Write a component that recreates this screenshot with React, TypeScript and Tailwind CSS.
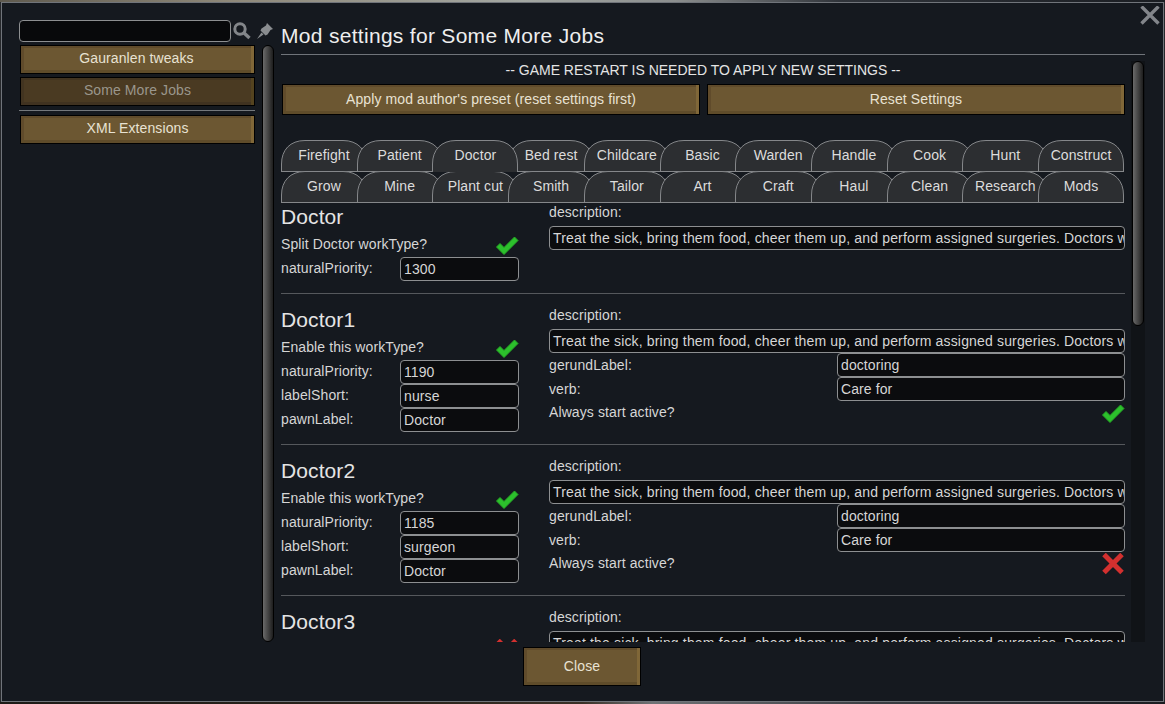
import React from "react";

const F = "font-['Liberation_Sans',Arial,sans-serif]";
const DESC = "Treat the sick, bring them food, cheer them up, and perform assigned surgeries. Doctors will also rescue the wounded.";

function Btn({ label, className = "", dim = false }: { label: string; className?: string; dim?: boolean }) {
  return (
    <div
      className={`flex items-center justify-center border border-black text-[14px] ${
        dim
          ? "bg-[#4a3a22] text-[#9a968c] shadow-[inset_-3px_0_0_#54431f,inset_0_-3px_0_#403220,inset_3px_0_0_#423420,inset_0_2px_0_#423420]"
          : "bg-[#6c5732] text-[#e8e2d2] shadow-[inset_-3px_0_0_#806738,inset_0_-3px_0_#5f4c2a,inset_3px_0_0_#604b2b,inset_0_2px_0_#604b2b]"
      } ${className}`}
    >
      {label}
    </div>
  );
}

function Field({ value, className = "" }: { value: string; className?: string }) {
  return (
    <div className={`h-[24px] border border-[#8d8f91] rounded-[4px] bg-[#0b0c0e] px-[3px] text-[14px] leading-[22px] text-[#d6d6d6] overflow-hidden whitespace-nowrap ${className}`}>
      {value}
    </div>
  );
}

function Check() {
  return (
    <svg width="24" height="22" viewBox="0 0 24 22" className="shrink-0">
      <path d="M1.5 13 L5 9.5 L9 13.5 L19.5 3 L23 6.5 L9 20.5 Z" fill="#2cc02c" stroke="#26a826" strokeWidth="1" />
    </svg>
  );
}

function Cross() {
  return (
    <svg width="24" height="22" viewBox="0 0 24 22" className="shrink-0">
      <path d="M3 1.5 L21 19.5 M21 1.5 L3 19.5" fill="none" stroke="#d3302f" strokeWidth="5" />
    </svg>
  );
}

function Row({ label, children }: { label: string; children: React.ReactNode }) {
  return (
    <div className="flex h-[24px] justify-between items-start">
      <div className="leading-[22px] text-[14px] text-[#d6d6d6] w-[119px] whitespace-nowrap">{label}</div>
      {children}
    </div>
  );
}

type S = {
  name: string;
  toggle: string;
  on: boolean;
  prio: string;
  short?: string;
  pawn?: string;
  start?: boolean;
  first?: boolean;
};

function Section({ s }: { s: S }) {
  return (
    <div className={`flex gap-[30px] w-[844px] shrink-0 border-b border-[#55585c] ${s.first ? "h-[92px]" : "h-[151px] pt-[11px]"}`}>
      <div className="w-[238px] shrink-0">
        <div className="h-[31px] text-[21px] leading-[30px] text-[#e4e4e4]">{s.name}</div>
        <div className="flex h-[24px] justify-between items-center">
          <span className="text-[14px] leading-[22px] text-[#d6d6d6] -mt-[3px]">{s.toggle}</span>
          {s.on ? <Check /> : <Cross />}
        </div>
        <Row label="naturalPriority:"><Field value={s.prio} className="w-[119px]" /></Row>
        {s.short && <Row label="labelShort:"><Field value={s.short} className="w-[119px]" /></Row>}
        {s.pawn && <Row label="pawnLabel:"><Field value={s.pawn} className="w-[119px]" /></Row>}
      </div>
      <div className="w-[576px] shrink-0">
        <div className="h-[24px] text-[14px] leading-[20px] text-[#d6d6d6]">description:</div>
        <Field value={DESC} className="tracking-[0.16px]" />
        {s.pawn && (
          <>
            <div className="flex h-[24px] items-start">
              <span className="w-[288px] text-[14px] leading-[24px] text-[#d6d6d6]">gerundLabel:</span>
              <Field value="doctoring" className="w-[288px]" />
            </div>
            <div className="flex h-[24px] items-start">
              <span className="w-[288px] text-[14px] leading-[24px] text-[#d6d6d6]">verb:</span>
              <Field value="Care for" className="w-[288px]" />
            </div>
            <div className="flex h-[24px] items-center justify-between">
              <span className="text-[14px] leading-[22px] text-[#d6d6d6] -mt-[3px]">Always start active?</span>
              {s.start ? <Check /> : <Cross />}
            </div>
          </>
        )}
      </div>
    </div>
  );
}

function Tab({ label, selected = false }: { label: string; selected?: boolean }) {
  return (
    <div className={`relative w-[86px] h-[31px] -mr-[10.3px] shrink-0 flex items-center justify-center text-[14px] text-[#dcdcdc] ${selected ? "z-10" : ""}`}>
      <svg width="86" height="32" viewBox="0 0 86 32" className="absolute left-0 top-0">
        <path d="M0.5 32 V24 C0.5 10 9 0.5 24 0.5 H62 C77 0.5 85.5 10 85.5 24 V32 Z" fill="#2c2e31" stroke="none" />
        <path d="M0.5 32 V24 C0.5 10 9 0.5 24 0.5 H62 C77 0.5 85.5 10 85.5 24 V32" fill="none" stroke="#85878a" strokeWidth="1" />
        {!selected && <path d="M0 31.5 H86" stroke="#85878a" strokeWidth="1" />}
      </svg>
      <span className="relative">{label}</span>
    </div>
  );
}

const row1 = ["Firefight", "Patient", "Doctor", "Bed rest", "Childcare", "Basic", "Warden", "Handle", "Cook", "Hunt", "Construct"];
const row2 = ["Grow", "Mine", "Plant cut", "Smith", "Tailor", "Art", "Craft", "Haul", "Clean", "Research", "Mods"];

const sections: S[] = [
  { name: "Doctor", toggle: "Split Doctor workType?", on: true, prio: "1300", first: true },
  { name: "Doctor1", toggle: "Enable this workType?", on: true, prio: "1190", short: "nurse", pawn: "Doctor", start: true },
  { name: "Doctor2", toggle: "Enable this workType?", on: true, prio: "1185", short: "surgeon", pawn: "Doctor", start: false },
  { name: "Doctor3", toggle: "Enable this workType?", on: false, prio: "1180" },
];

export default function App() {
  return (
    <div className={`${F} w-[1165px] h-[704px] bg-[#26282b] overflow-hidden flex flex-col tracking-[0.1px]`}>
      <div className="h-[2px] shrink-0 bg-[linear-gradient(90deg,#5f5a4e_0%,#8f897a_20%,#a3a7a2_45%,#8b8e8e_58%,#30343a_72%,#1a1d22_100%)]" />
      <div className="relative mx-[1px] flex-1 min-h-0 border border-[#70747a] bg-[#15191f] flex">
        {/* close X */}
        <svg width="20" height="20" viewBox="0 0 20 20" className="absolute right-[3px] top-[3px]">
          <path d="M1.5 0.5 L18.5 17.5 M18.5 0.5 L1.5 17.5" stroke="#82858a" strokeWidth="3.4" fill="none" />
        </svg>

        {/* left column */}
        <div className="w-[279px] shrink-0 pl-[17px] pt-[17px] flex flex-col">
          <div className="flex items-center h-[22px]">
            <div className="w-[212px] h-[22px] border border-[#8d8f91] rounded-[4px] bg-[#08090b]" />
            <svg width="20" height="20" viewBox="0 0 20 20" className="ml-[1px]">
              <circle cx="8" cy="8" r="5.2" fill="none" stroke="#83868a" strokeWidth="3" />
              <path d="M11.5 11.5 L17.5 17" stroke="#83868a" strokeWidth="3.4" />
            </svg>
            <svg width="18" height="18" viewBox="0 0 18 18" className="ml-[4px]">
              <path d="M11 1 L17 7 L14.5 8 L11.5 12.5 L9.5 13.5 L4.5 8.5 L5.5 6.5 L10 3.5 Z" fill="#8a8d90" />
              <path d="M5.5 10.5 L1 17 L7.5 12.5 Z" fill="#8a8d90" />
            </svg>
          </div>
          <div className="flex gap-[7px] mt-[3px]">
            <div className="w-[235px] flex flex-col ml-[1px]">
              <Btn label="Gauranlen tweaks" className="h-[29px] pb-[2px] pr-[2px]" />
              <Btn label="Some More Jobs" dim className="h-[29px] mt-[3px] pb-[2px]" />
              <div className="h-px bg-[#74787c] mt-[4px] -ml-[1px] w-[236px]" />
              <Btn label="XML Extensions" className="h-[29px] mt-[4px] pb-[2px]" />
            </div>
            <div className="w-[12px] h-[597px] rounded-full border border-black bg-gradient-to-r from-[#6a6a6a] via-[#444444] to-[#1e1e1e]" />
          </div>
        </div>

        {/* right column */}
        <div className="flex-1 flex flex-col">
          <div className="h-[35px] mt-[17px] w-[864px] text-[21px] tracking-[0.3px] leading-[32px] text-[#eeeeee] border-b border-[#70747a] flex-none">
            Mod settings for Some More Jobs
          </div>
          <div className="flex gap-[6px] flex-1 min-h-0">
            <div className="w-[844px]">
              <div className="h-[29px] text-center text-[14px] tracking-normal leading-[30px] text-[#e4e4e4]">-- GAME RESTART IS NEEDED TO APPLY NEW SETTINGS --</div>
              <div className="flex gap-[7px] ml-[1px]">
                <Btn label="Apply mod author's preset (reset settings first)" className="w-[418px] h-[31px]" />
                <Btn label="Reset Settings" className="w-[418px] h-[31px]" />
              </div>
              <div className="mt-[25px] flex">
                {row1.map((t) => <Tab key={t} label={t} selected={t === "Doctor"} />)}
              </div>
              <div className="flex">
                {row2.map((t) => <Tab key={t} label={t} />)}
              </div>
              <div className="h-[440px] overflow-hidden flex flex-col">
                {sections.map((s) => <Section key={s.name} s={s} />)}
              </div>
            </div>
            <div className="w-[14px] h-[581px] mt-[6px] bg-[#101317]">
              <div className="ml-[1px] w-[12px] h-[265px] rounded-full border border-black bg-gradient-to-r from-[#6a6a6a] via-[#444444] to-[#1e1e1e]" />
            </div>
          </div>
        </div>

        {/* close */}
        <Btn label="Close" className="absolute left-[521px] bottom-[15px] w-[118px] h-[39px] text-[#e5dcc0]" />
      </div>
      <div className="h-[2px] shrink-0 bg-[linear-gradient(90deg,#1d1a16_0%,#2a241b_35%,#3a3026_50%,#6f7275_56%,#3a3d42_75%,#1a1c20_100%)]" />
    </div>
  );
}
